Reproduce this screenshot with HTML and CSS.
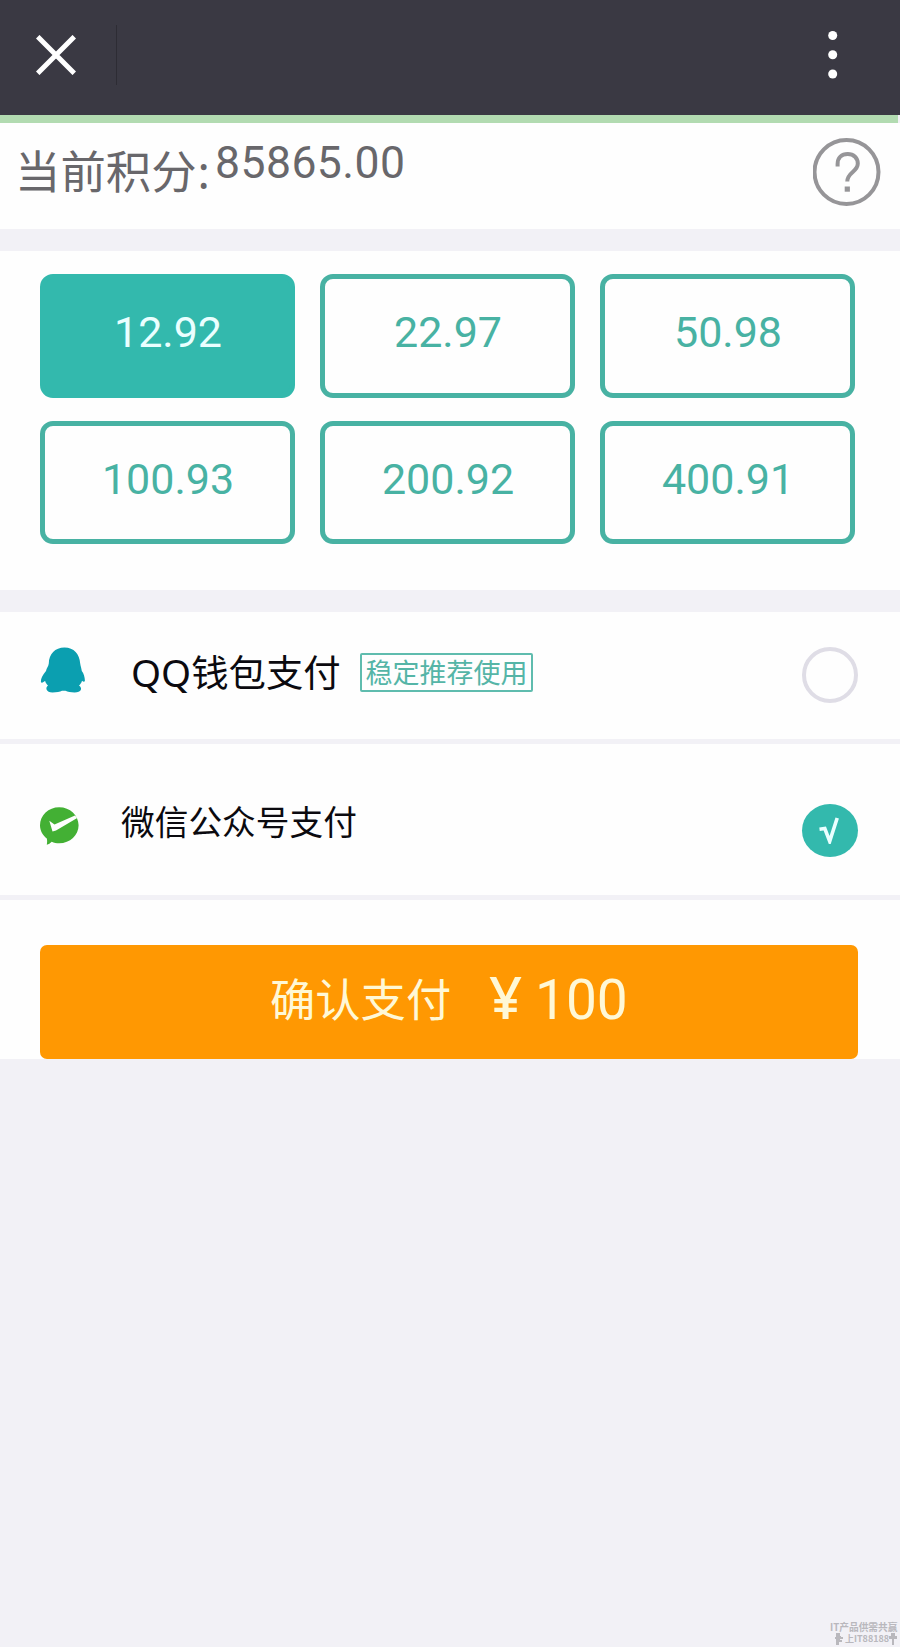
FILE: index.html
```html
<!DOCTYPE html>
<html lang="zh-CN">
<head>
<meta charset="utf-8">
<title>支付</title>
<link rel="stylesheet" href="styles.css">
</head>
<body>
<header class="bar">
  <svg class="close" viewBox="0 0 40 40"><path d="M1.700 1.700 38.300 38.300M38.300 1.700 1.700 38.300"/></svg>
  <span class="bar-divider"></span>
  <svg class="more" viewBox="0 0 10 48"><circle cx="4.700" cy="4.500" r="4.500"/><circle cx="4.700" cy="23.700" r="4.500"/><circle cx="4.700" cy="43" r="4.500"/></svg>
</header>
<div class="progress"></div>
<section class="points">
  <span class="points-label">当前积分<span class="colon">:</span></span>
  <span class="points-value">85865.00</span>
  <svg class="help" viewBox="0 0 68 68"><circle cx="33.500" cy="34" r="32"/><path d="M24.600 28.500V26C24.600 20 28.600 16 34.700 16S44.800 20 44.800 25.500C44.800 34 34.300 34 34.300 43.500"/><rect x="31.700" y="48.500" width="5.200" height="5.200"/></svg>
</section>
<section class="amounts">
  <button class="amount selected">12.92</button>
  <button class="amount">22.97</button>
  <button class="amount">50.98</button>
  <button class="amount">100.93</button>
  <button class="amount">200.92</button>
  <button class="amount">400.91</button>
</section>
<section class="methods">
  <div class="method qq">
    <svg class="qq-icon" viewBox="0 0 44 46"><path d="M24 .5C14.500.500 8.500 7 8.300 16.500 8 19.500 6 21 5.500 24 2 28 .3 31.500.400 34.800.700 36.500 3 35.500 4.600 33.800 5 36 6 37 7.500 38.500 4.500 40.500 5.500 45.500 12 45.500 16 45.500 19.500 45 21.500 43.800H25C27 45 30.500 45.500 34 45.500 41 45.500 42.300 41 38.500 38.500 40 37 41 36 41.500 33.800 43 35 44.300 35 44.400 33.500 44.300 30 43.300 26.500 41.300 24 40.900 21 40 19 39.700 16.500 39 7 33.500.500 24 .500Z"/></svg>
    <span class="qq-name"><span class="latin">QQ</span>钱包支付</span>
    <span class="badge">稳定推荐使用</span>
    <span class="radio"></span>
  </div>
  <div class="method wechat">
    <svg class="wx-icon" viewBox="0 0 39 38"><path class="bubble" d="M19.200.200C30 .200 38.600 8.300 38.600 18.200S30 36.200 19.200 36.200C16.500 36.200 14 35.700 11.700 34.700 10.200 36.200 8.700 37.200 6.800 37.700 7.200 35.500 7.300 33.500 6.800 31.500 2.700 28.200 0 23.500 0 18.200 0 8.300 8.500.200 19.200.200Z"/><path class="tick" d="M9.300 13.800 14.500 17.500 35 8.500 37.200 11 16 23.500 12.500 24.500Z"/></svg>
    <span class="wx-name">微信公众号支付</span>
    <span class="radio checked"><svg viewBox="0 0 20 27"><path d="M.500 12.200 5.800 11.500 10.700 24.300 18.200 1"/></svg></span>
  </div>
</section>
<section class="pay">
  <button class="confirm"><span class="confirm-text">确认支付</span><span class="yen">¥</span><span class="total">100</span></button>
</section>
<footer class="mark">
  <span>IT产品供需共赢</span>
  <span class="mark-row">
    <svg viewBox="0 0 8 12"><path d="M1 0h4v3h1v1h2v2H5v1h2v2H4v3H1V6H0V4h1z"/></svg>
    <span class="mark-id">上IT88188</span>
    <svg viewBox="0 0 8 12"><path d="M2 0h4v3h2v3H5v6H3V6H0V3h2z"/></svg>
  </span>
</footer>
</body>
</html>
```
FILE: styles.css
```css
* { box-sizing: border-box; }
body {
  margin: 0;
  min-height: 1647px;
  display: flex;
  flex-direction: column;
  background: #f2f1f6;
  font-family: Roboto, "Noto Sans CJK SC", sans-serif;
}
button { font: inherit; padding: 0; margin: 0; }
svg { display: block; flex: none; }

.bar {
  height: 115px;
  padding: 0 62px 6px 36px;
  display: flex;
  align-items: center;
  background: #3a3943;
}
.close { width: 40px; height: 40px; fill: none; stroke: #fff; stroke-width: 5; }
.bar-divider { width: 1px; height: 60px; margin-left: 40px; background: #2d2c34; }
.more { width: 10px; height: 48px; margin-left: auto; fill: #fff; }
.progress { width: 898px; height: 8px; background: #b2dbb1; }

.points {
  height: 106px;
  padding: 0 19px 0 15px;
  display: flex;
  align-items: flex-start;
  background: #fefefe;
  color: #68676b;
}
.points-label {
  width: 200px;
  margin-top: 13px;
  font: 45.400px/66px "Noto Sans CJK SC", sans-serif;
  white-space: nowrap;
}
.colon { margin-left: 1px; font-family: "Noto Sans", sans-serif; font-size: 46px; line-height: 1; }
.points-value { margin-top: 14px; font-size: 44.500px; line-height: 52px; letter-spacing: .45px; }
.help { width: 68px; height: 68px; margin: 15px 0 0 auto; fill: none; stroke: #969598; stroke-width: 4; }
.help rect { fill: #969598; stroke: none; }

.amounts {
  height: 339px;
  margin-top: 22px;
  padding: 23px 45px 46px 40px;
  display: grid;
  grid-template-columns: repeat(3, 255px);
  justify-content: space-between;
  grid-template-rows: 124px 123px;
  row-gap: 23px;
  background: #fefefe;
}
.amount {
  padding: 0 0 8px 1px;
  border: 5px solid #48b2a3;
  border-radius: 13px;
  background: #fefefe;
  color: #48b2a3;
  font-size: 43px;
  line-height: 50px;
}
.amount.selected { background: #33b9ad; border-color: #33b9ad; color: #eaffff; }

.methods { margin-top: 22px; background: #fefefe; color: #0b0a0f; font-family: "Noto Sans CJK SC", sans-serif; }
.method { display: flex; align-items: flex-start; border-bottom: 5px solid #f2f1f6; padding: 0 42px 0 40px; }
.qq { height: 132px; }
.wechat { height: 156px; }
.qq-icon { width: 45px; height: 46px; margin-top: 35px; fill: #0b9fb0; }
.qq-name { width: 229px; margin: 31px 0 0 46px; font-size: 37.400px; line-height: 56px; white-space: nowrap; }
.latin { font-family: "Noto Sans", sans-serif; font-size: 38.500px; line-height: 1; }
.badge {
  width: 173px;
  height: 39px;
  margin-top: 41px;
  border: 2px solid #5fbcae;
  border-radius: 2px;
  color: #55b5a7;
  font-size: 27px;
  line-height: 34px;
  text-align: center;
  white-space: nowrap;
}
.radio { width: 56px; height: 56px; margin: 35px 0 0 auto; border: 4px solid #dfdde6; border-radius: 50%; }
.wx-icon { width: 39px; height: 38px; margin-top: 63px; }
.bubble { fill: #43b034; }
.tick { fill: #fefefe; }
.wx-name { margin: 52px 0 0 42px; font-size: 33.700px; line-height: 50px; }
.radio.checked { height: 53px; margin-top: 60px; padding: 13px 0 0 17px; border: 0; background: #33b9ad; }
.checked svg { width: 20px; height: 27px; fill: none; stroke: #eaffff; stroke-width: 3.600; }

.pay { height: 159px; padding: 45px 42px 0 40px; background: #fefefe; }
.confirm {
  width: 100%;
  height: 114px;
  padding-left: 230px;
  display: flex;
  align-items: flex-start;
  border: 0;
  border-radius: 7px;
  background: #ff9802;
  color: #fff8d6;
}
.confirm-text { width: 219px; margin-top: 19px; font: 45.300px/66px "Noto Sans CJK SC", sans-serif; text-align: left; }
.yen { width: 46px; margin-top: 17px; font: 500 58px/70px "Noto Sans", sans-serif; text-align: left; }
.total { margin-top: 23px; font-size: 55px; line-height: 64px; }

.mark {
  width: 70px;
  height: 26px;
  margin: auto 0 0 auto;
  display: flex;
  flex-direction: column;
  color: #b9b8bd;
  font: bold 9.700px/12px "Noto Sans CJK SC", sans-serif;
  white-space: nowrap;
}
.mark-row { display: flex; gap: 2px; padding-left: 5px; }
.mark-row svg { width: 8px; height: 12px; fill: #b9b8bd; }
.mark-id { width: 42px; font-size: 9px; }
```
